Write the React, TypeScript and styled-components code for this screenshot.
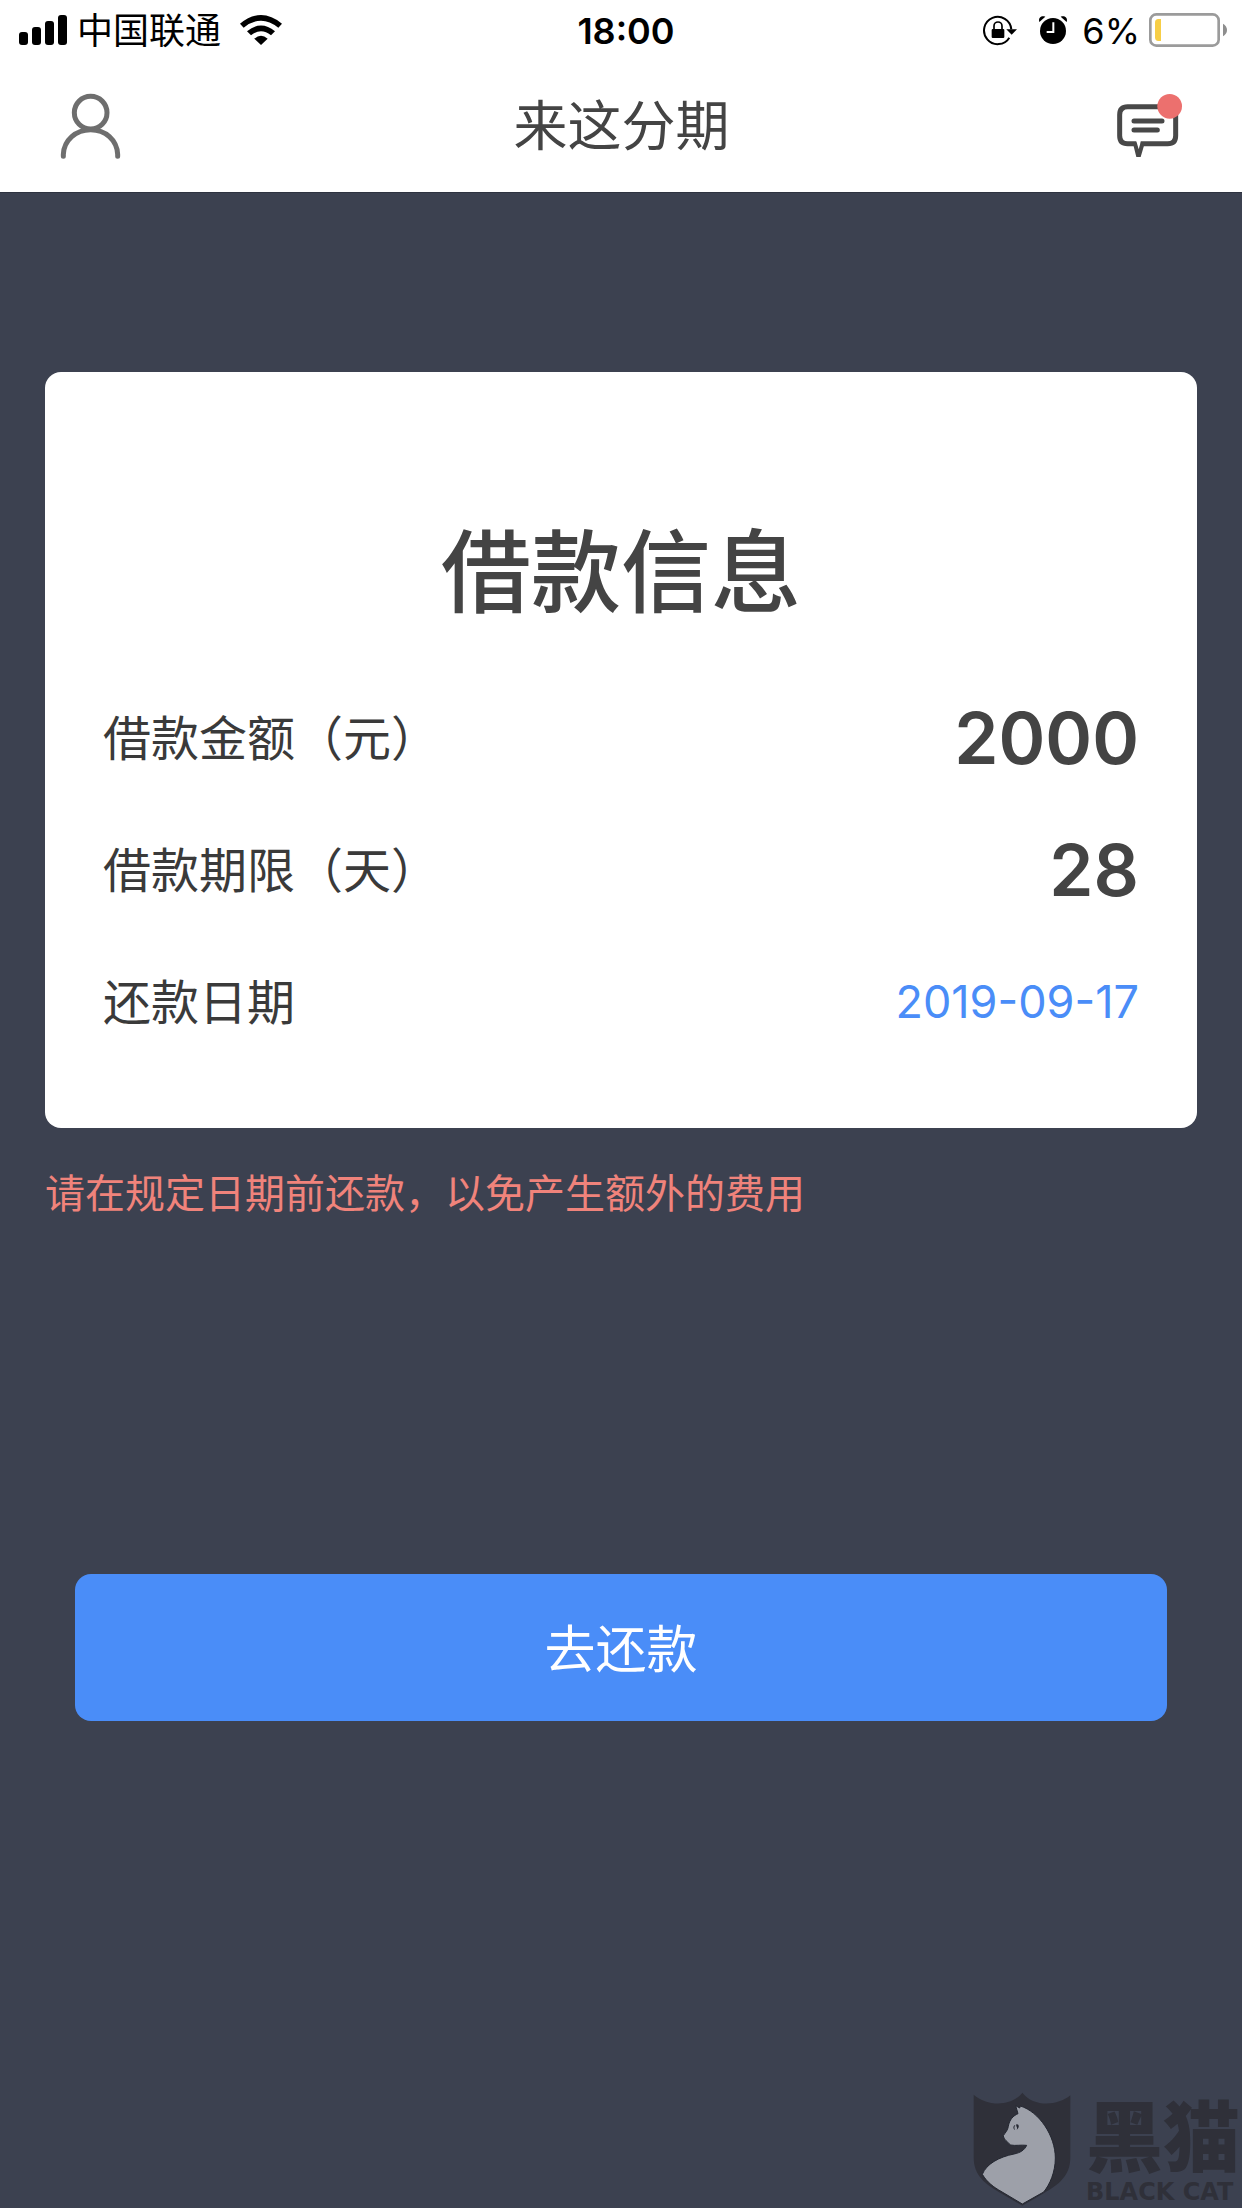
import React from "react";
import styled, { createGlobalStyle } from "styled-components";

const GlobalStyle = createGlobalStyle`
  *, *::before, *::after { box-sizing: border-box; }
  body {
    margin: 0;
    background: #3c4150;
    color: #444;
    font-family: Inter, "Noto Sans CJK SC", sans-serif;
  }
`;

const Page = styled.div`
  display: flex;
  flex-direction: column;
  min-height: 100vh;
`;

const Header = styled.header`
  background: #fff;
  border-bottom: 1px solid #2e3340;
`;

const StatusBar = styled.div`
  display: grid;
  grid-template-columns: 1fr auto 1fr;
  align-items: center;
  height: 60px;
  padding-left: 10px;
  color: #000;
  font-size: 36px;
  line-height: 56px;
  white-space: nowrap;
`;

const StatusGroup = styled.div<{ $gap: number; $end?: boolean }>`
  display: flex;
  align-items: center;
  justify-content: ${(p) => (p.$end ? "flex-end" : "flex-start")};
  gap: ${(p) => p.$gap}px;
  svg { display: block; flex: none; }
`;

const StatusStart = styled(StatusGroup)`
  padding-left: 8px;
`;

const StatusEnd = styled(StatusGroup)`
  padding-right: 14px;
`;

const StatusText = styled.span`
  padding-top: 2px;
`;

const Time = styled.time`
  padding-top: 2px;
  font-weight: 600;
`;

const NavBar = styled.nav`
  display: grid;
  grid-template-columns: 1fr auto 1fr;
  align-items: center;
  height: 132px;
  padding: 0 59px 0 60px;
`;

const NavTitle = styled.h1`
  margin: 0;
  padding-top: 2px;
  font-size: 54px;
  font-weight: 400;
  line-height: 60px;
`;

const IconButton = styled.button<{ $end?: boolean }>`
  justify-self: ${(p) => (p.$end ? "end" : "start")};
  padding: 0;
  border: 0;
  background: none;
  cursor: pointer;
  svg { display: block; }
`;

const Main = styled.main`
  display: flex;
  flex-direction: column;
  padding: 179px 45px 0;
`;

const Card = styled.section`
  padding: 135px 58px 60px;
  border-radius: 16px;
  background: #fff;
`;

const CardTitle = styled.h2`
  margin: 0 0 33px;
  font-size: 90px;
  font-weight: 500;
  line-height: 132px;
  text-align: center;
`;

const Details = styled.dl`
  margin: 0;
`;

const DetailRow = styled.div`
  display: flex;
  align-items: center;
  justify-content: space-between;
  height: 132px;
`;

const DetailLabel = styled.dt`
  padding-top: 2px;
  color: #3a3a3a;
  font-size: 48px;
  line-height: 72px;
`;

const DetailValue = styled.dd<{ $link?: boolean }>`
  margin: 0;
  color: ${(p) => (p.$link ? "#4a8df8" : "#444")};
  font-size: ${(p) => (p.$link ? 45 : 71)}px;
  font-weight: ${(p) => (p.$link ? 400 : 600)};
  line-height: 72px;
`;

const Notice = styled.p`
  margin: 36px 0 0;
  color: #f0837b;
  font-size: 40px;
  line-height: 60px;
`;

const PayButton = styled.button`
  height: 147px;
  margin: 350px 30px 0;
  padding: 4px 0 0;
  border: 0;
  border-radius: 16px;
  background: #4a8df8;
  color: #fff;
  font-family: inherit;
  font-size: 51px;
  line-height: 72px;
  cursor: pointer;
`;

const Brand = styled.footer`
  display: flex;
  align-self: flex-end;
  align-items: flex-end;
  gap: 15px;
  margin-top: auto;
  padding: 0 2px 2px 0;
  color: #2f3039;
  svg { display: block; }
`;

const BrandText = styled.div`
  display: flex;
  flex-direction: column;
  gap: 6px;
`;

const BrandName = styled.span`
  font-family: "Noto Sans CJK SC", sans-serif;
  font-size: 77px;
  font-weight: 900;
  line-height: 78px;
`;

const BrandLatin = styled.span`
  font-family: "DejaVu Sans", sans-serif;
  font-size: 24px;
  font-weight: 700;
  line-height: 28px;
`;

const SignalIcon = () => (
  <svg width="50" height="32" viewBox="51 42 150 96" aria-hidden="true">
    <rect x="54" y="96" width="27" height="39" rx="9" />
    <rect x="93" y="81" width="27" height="54" rx="9" />
    <rect x="132" y="63" width="27" height="72" rx="9" />
    <rect x="171" y="45" width="27" height="90" rx="9" />
  </svg>
);

const WifiIcon = () => (
  <svg width="44" height="32" viewBox="717 42 132 96" aria-hidden="true">
    <path d="M720 71Q783 19 846 71L835 83Q783 41 731 83Z" />
    <path d="M741 94Q783 59 825 94L813 106Q783 82 753 106Z" />
    <path d="M763 116Q783 98 803 116L783 135Z" />
  </svg>
);

const RotationLockIcon = () => (
  <svg width="36" height="32" viewBox="120 42 108 96" aria-hidden="true">
    <path d="M202 113A41 41 0 1 1 208 88" fill="none" stroke="#000" strokeWidth="6" />
    <path d="M193 88H225L209 104Z" />
    <rect x="149" y="87" width="38" height="27" rx="3" />
    <path d="M156 89V78a12 12 0 0 1 24 0V89" fill="none" stroke="#000" strokeWidth="5" />
  </svg>
);

const AlarmIcon = () => (
  <svg width="30" height="30" viewBox="291 45 90 90" aria-hidden="true">
    <circle cx="336" cy="93" r="39" />
    <path d="M295 66C291 54 300 45 313 50Z" />
    <path d="M377 66C381 54 372 45 359 50Z" />
    <path d="M337 67V96H317" fill="none" stroke="#fff" strokeWidth="6" />
  </svg>
);

const BatteryIcon = () => (
  <svg width="80" height="36" viewBox="618 36 240 108" aria-hidden="true">
    <rect x="625" y="43" width="205" height="94" rx="18" fill="#fff" stroke="#9b9b9b" strokeWidth="8" />
    <path d="M657 57H649Q639 57 639 68V112Q639 123 649 123H657Z" fill="#f7ce46" />
    <path d="M843 71Q855 78 855 90T843 109Z" fill="#8e8e8e" />
  </svg>
);

const UserIcon = () => (
  <svg width="61" height="67" viewBox="180 279 183 201" fill="none" stroke="#6e6e6e" strokeWidth="15" strokeLinecap="round" aria-hidden="true">
    <circle cx="272" cy="338" r="49" />
    <path d="M190 469V463C192 420 228 389 272 389S351 420 353 463V469" />
  </svg>
);

const MessageIcon = () => (
  <svg width="67" height="65" viewBox="522 281 201 195" aria-hidden="true">
    <path d="M557 319H677Q701 319 701 343V406Q701 430 677 430H557Q533 430 533 406V343Q533 319 557 319Z" fill="none" stroke="#484848" strokeWidth="15" />
    <path d="M583 420H596V432L590 448L583 432Z" fill="#fff" />
    <path d="M572 426H584L590 447L596 426H609L596 470H583Z" fill="#484848" />
    <path d="M576 362H660M576 389H646" stroke="#484848" strokeWidth="15" strokeLinecap="round" />
    <circle cx="683" cy="318" r="37" fill="#ec706e" />
  </svg>
);

const CatShield = () => (
  <svg width="98" height="114" viewBox="92 74 294 342" aria-hidden="true">
    <path
      d="M94 82C135 118 208 118 240 76C272 118 343 118 384 84V270C384 325 350 352 304 378L240 415L176 378C128 350 94 325 94 270Z"
      fill="#2f3039"
    />
    <path
      d="M220 115L232 122L234 116C290 133 339 205 339 272C339 315 322 352 304 374L240 410L176 372C155 360 134 345 120 321C132 290 170 269 215 260C234 256 246 249 253 234C236 232 219 236 205 233C196 224 184 216 183 205C190 194 196 190 198 177C201 157 213 145 227 139Z"
      fill="#9da0a9"
      stroke="#242731"
      strokeWidth="3"
    />
    <path d="M219 173C212 175 211 184 218 188C215 182 216 178 219 173Z" fill="#242731" />
    <path d="M222 171C231 169 232 181 223 187C227 180 220 178 222 171Z" fill="#242731" />
  </svg>
);

const details = [
  { label: "借款金额（元）", value: "2000" },
  { label: "借款期限（天）", value: "28" },
  { label: "还款日期", value: "2019-09-17", link: true },
];

export default function App() {
  return (
    <Page>
      <GlobalStyle />
      <Header>
        <StatusBar>
          <StatusStart $gap={18}>
            <StatusGroup $gap={9}>
              <SignalIcon />
              <StatusText>中国联通</StatusText>
            </StatusGroup>
            <WifiIcon />
          </StatusStart>
          <Time>18:00</Time>
          <StatusEnd $gap={14} $end>
            <StatusGroup $gap={20}>
              <RotationLockIcon />
              <AlarmIcon />
            </StatusGroup>
            <StatusGroup $gap={8}>
              <StatusText>6%</StatusText>
              <BatteryIcon />
            </StatusGroup>
          </StatusEnd>
        </StatusBar>
        <NavBar>
          <IconButton type="button" aria-label="我的">
            <UserIcon />
          </IconButton>
          <NavTitle>来这分期</NavTitle>
          <IconButton type="button" aria-label="消息" $end>
            <MessageIcon />
          </IconButton>
        </NavBar>
      </Header>
      <Main>
        <Card>
          <CardTitle>借款信息</CardTitle>
          <Details>
            {details.map((d) => (
              <DetailRow key={d.label}>
                <DetailLabel>{d.label}</DetailLabel>
                <DetailValue $link={d.link}>{d.value}</DetailValue>
              </DetailRow>
            ))}
          </Details>
        </Card>
        <Notice>请在规定日期前还款，以免产生额外的费用</Notice>
        <PayButton type="button">去还款</PayButton>
      </Main>
      <Brand>
        <CatShield />
        <BrandText>
          <BrandName>黑猫</BrandName>
          <BrandLatin>BLACK CAT</BrandLatin>
        </BrandText>
      </Brand>
    </Page>
  );
}
